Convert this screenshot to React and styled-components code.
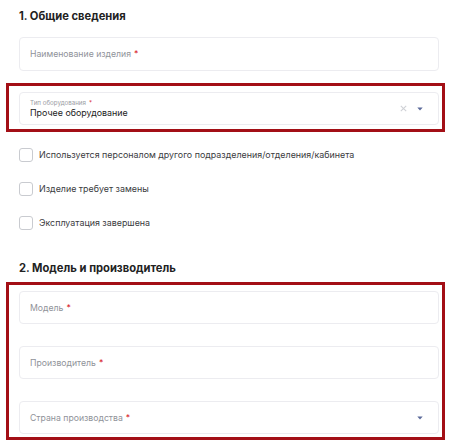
import React from 'react';
import styled, { createGlobalStyle } from 'styled-components';

const GlobalStyle = createGlobalStyle`
  body {
    margin: 0;
    background: #fff;
    font-family: Inter, "Noto Sans", sans-serif;
  }
`;

const Page = styled.div`
  width: 450px;
  height: 447px;
  box-sizing: border-box;
  padding: 8px 11px 0 19px;
  overflow: hidden;
`;

const Title = styled.h2`
  margin: ${p => p.$before || 0}px 0 ${p => p.$after || 13}px;
  font-size: 11.2px;
  line-height: 16px;
  font-weight: 700;
  color: #222;
`;

const Highlight = styled.div`
  margin: ${p => p.$top || 0}px -6px 0 -13px;
  padding: ${p => p.$pad}px 3px ${p => p.$padBottom ?? p.$pad}px 10px;
  border: 3px solid #a30f16;
  display: flex;
  flex-direction: column;
  gap: 22px;
`;

const Field = styled.div`
  height: ${p => p.$h || 33}px;
  box-sizing: border-box;
  border: 1px solid #ececf0;
  border-radius: 4px;
  background: #fff;
  display: flex;
  align-items: center;
  padding: 0 15px 0 10px;
`;

const Placeholder = styled.span`
  flex: 1;
  font-size: 8.7px;
  color: #8f9299;
`;

const Star = styled.span`
  color: #d8262d;
  margin-left: 3px;
`;

const SelectBody = styled.div`
  flex: 1;
  display: flex;
  flex-direction: column;
  gap: 1px;
`;

const SmallLabel = styled.span`
  font-size: 6.2px;
  line-height: 7px;
  color: #9a9ca3;
`;

const Value = styled.span`
  font-size: 8.9px;
  line-height: 12px;
  color: #222;
`;

const Icons = styled.div`
  display: flex;
  align-items: center;
  gap: 10px;
`;

const Checks = styled.div`
  display: flex;
  flex-direction: column;
  gap: 21px;
  margin: 16px 0 0;
`;

const CheckRow = styled.label`
  display: flex;
  align-items: center;
  gap: 6px;
  height: 13px;
  font-size: 8.9px;
  color: #3a3b40;
`;

const Box = styled.span`
  width: 12px;
  height: 12px;
  border: 1px solid #c9cbd0;
  border-radius: 3px;
  flex: none;
`;

const Caret = () => (
  <svg width="6" height="4" viewBox="0 0 6 4">
    <path d="M0.3 0.5 L5.7 0.5 L3 3.6 Z" fill="#5b6a9a" />
  </svg>
);

const Cross = () => (
  <svg width="7" height="7" viewBox="0 0 7 7">
    <path d="M0.8 0.8 L6.2 6.2 M6.2 0.8 L0.8 6.2" stroke="#cfd1d6" strokeWidth="1.1" />
  </svg>
);

export default function App() {
  return (
    <Page>
      <GlobalStyle />
      <Title>1. Общие сведения</Title>
      <Field $h={34}>
        <Placeholder>Наименование изделия<Star>*</Star></Placeholder>
      </Field>

      <Highlight $top={12} $pad={6} $padBottom={4}>
        <Field>
          <SelectBody>
            <SmallLabel>Тип оборудования<Star>*</Star></SmallLabel>
            <Value>Прочее оборудование</Value>
          </SelectBody>
          <Icons>
            <Cross />
            <Caret />
          </Icons>
        </Field>
      </Highlight>

      <Checks>
        <CheckRow><Box />Используется персоналом другого подразделения/отделения/кабинета</CheckRow>
        <CheckRow><Box />Изделие требует замены</CheckRow>
        <CheckRow><Box />Эксплуатация завершена</CheckRow>
      </Checks>

      <Title $before={31} $after={6}>2. Модель и производитель</Title>
      <Highlight $pad={6} $padBottom={3}>
        <Field>
          <Placeholder>Модель<Star>*</Star></Placeholder>
        </Field>
        <Field>
          <Placeholder>Производитель<Star>*</Star></Placeholder>
        </Field>
        <Field>
          <Placeholder>Страна производства<Star>*</Star></Placeholder>
          <Caret />
        </Field>
      </Highlight>
    </Page>
  );
}
